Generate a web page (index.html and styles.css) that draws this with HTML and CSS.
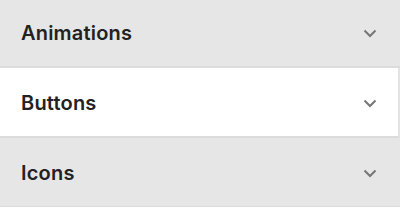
FILE: index.html
```html
<!DOCTYPE html>
<html>
<head>
<meta charset="utf-8">
<link rel="stylesheet" href="styles.css">
</head>
<body>
<div class="list">
  <div class="item">
    <span class="title">Animations</span>
    <svg class="chev" width="14" height="9" viewBox="0 0 14 9"><path d="M1.5 1.5 L7 7 L12.5 1.5" fill="none" stroke="#767676" stroke-width="2"/></svg>
  </div>
  <div class="item active">
    <span class="title">Buttons</span>
    <svg class="chev" width="14" height="9" viewBox="0 0 14 9"><path d="M1.5 1.5 L7 7 L12.5 1.5" fill="none" stroke="#767676" stroke-width="2"/></svg>
  </div>
  <div class="item">
    <span class="title">Icons</span>
    <svg class="chev" width="14" height="9" viewBox="0 0 14 9"><path d="M1.5 1.5 L7 7 L12.5 1.5" fill="none" stroke="#767676" stroke-width="2"/></svg>
  </div>
</div>
</body>
</html>
```

FILE: styles.css
```css
html, body {
  margin: 0;
  padding: 0;
  background: #e6e6e6;
  overflow: hidden;
}
.list {
  margin-top: -2px;
  display: flex;
  flex-direction: column;
}
.item {
  height: 68px;
  border-bottom: 2px solid #dcdcdc;
  background: #e6e6e6;
  display: flex;
  align-items: center;
  justify-content: space-between;
  padding: 2px 23px 0 21px;
  box-sizing: border-box;
  height: 70px;
}
.item.active {
  background: #ffffff;
  border-right: 2px solid #e3e3e3;
  padding-right: 21px;
}
.title {
  font-family: Inter, "Liberation Sans", sans-serif;
  font-weight: 600;
  font-size: 20px;
  letter-spacing: 0.2px;
  color: #222222;
}
.chev {
  display: block;
}
```
